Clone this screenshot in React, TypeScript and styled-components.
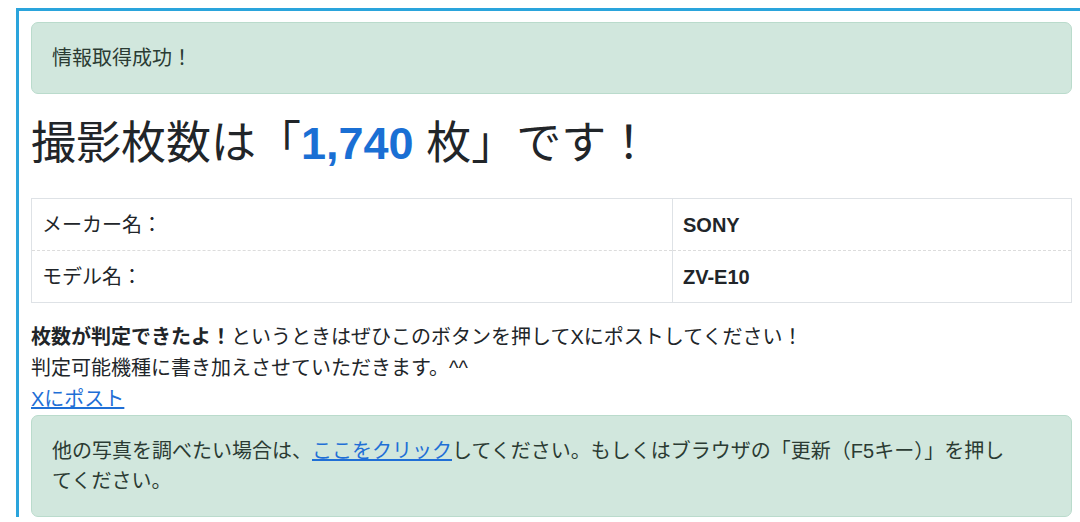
import styled, { createGlobalStyle } from 'styled-components'

const GlobalStyle = createGlobalStyle`
  html, body {
    margin: 0;
    padding: 0;
    background: #ffffff;
    overflow: hidden;
  }
  body {
    font-family: 'Liberation Sans', 'Noto Sans CJK JP', sans-serif;
    color: #212529;
    font-size: 20px;
  }
`

const Frame = styled.div`
  margin: 8px 0 0 16px;
  width: 1064px;
  box-sizing: border-box;
  border-top: 3px solid #2aa4dc;
  border-left: 3px solid #2aa4dc;
  padding: 11px 8px 0 12px;
`

const Alert = styled.div<{ $wide?: boolean }>`
  background: #d1e7dd;
  border: 1px solid #badbcc;
  border-radius: 7px;
  color: #2b3b33;
  font-size: 20px;
  line-height: 30px;
  padding: 20px ${p => (p.$wide ? '48px' : '20px')} 20px 20px;
`

const Heading = styled.h1`
  margin: 24px 0 28px;
  font-size: 45px;
  font-weight: 400;
  line-height: 52px;
  color: #212529;
`

const Count = styled.span`
  color: #1a6fd4;
  font-weight: 700;
`

const InfoTable = styled.table`
  width: 100%;
  border-collapse: collapse;
  border: 1px solid #dee2e6;
`

const Row = styled.tr`
  & + & td {
    border-top: 1px dashed #dcdcdc;
  }
`

const Label = styled.td`
  width: 620px;
  padding: 11px 10px 9px;
  line-height: 31px;
  border-right: 1px solid #dee2e6;
`

const Value = styled.td`
  padding: 11px 10px 9px;
  line-height: 31px;
  font-weight: 700;
`

const Note = styled.p`
  margin: 19px 0 0;
  line-height: 31px;
`

const Link = styled.a`
  color: #1f6fd6;
  text-decoration: underline;
`

export default function App() {
  return (
    <>
      <GlobalStyle />
      <Frame>
        <Alert>情報取得成功！</Alert>
        <Heading>
          撮影枚数は「<Count>1,740</Count> 枚」です！
        </Heading>
        <InfoTable>
          <tbody>
            <Row>
              <Label>メーカー名：</Label>
              <Value>SONY</Value>
            </Row>
            <Row>
              <Label>モデル名：</Label>
              <Value>ZV-E10</Value>
            </Row>
          </tbody>
        </InfoTable>
        <Note>
          <b>枚数が判定できたよ！</b>というときはぜひこのボタンを押してXにポストしてください！
          <br />
          判定可能機種に書き加えさせていただきます。^^
          <br />
          <Link href="#">Xにポスト</Link>
        </Note>
        <Alert $wide>
          他の写真を調べたい場合は、<Link href="#">ここをクリック</Link>してください。もしくはブラウザの「更新（F5キー）」を押してください。
        </Alert>
      </Frame>
    </>
  )
}
